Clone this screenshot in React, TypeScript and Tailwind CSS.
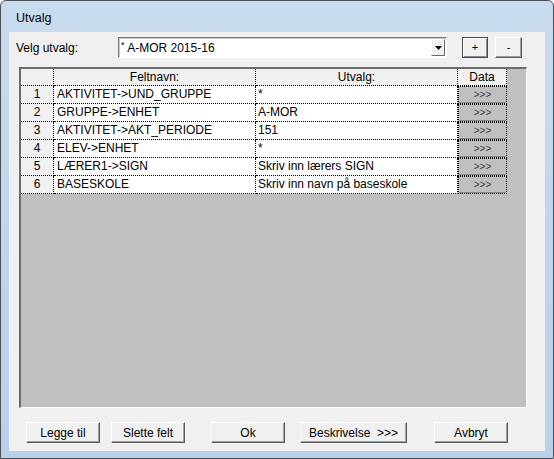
import React from 'react';

interface Row {
  id: number;
  felt: string;
  utvalg: string;
}

const rows: Row[] = [
  { id: 1, felt: 'AKTIVITET->UND_GRUPPE', utvalg: '*' },
  { id: 2, felt: 'GRUPPE->ENHET', utvalg: 'A-MOR' },
  { id: 3, felt: 'AKTIVITET->AKT_PERIODE', utvalg: '151' },
  { id: 4, felt: 'ELEV->ENHET', utvalg: '*' },
  { id: 5, felt: 'LÆRER1->SIGN', utvalg: 'Skriv inn lærers SIGN' },
  { id: 6, felt: 'BASESKOLE', utvalg: 'Skriv inn navn på baseskole' },
];

const btn =
  'h-[21px] bg-[#f0f0f0] border border-t-white border-l-white border-b-[#5a5a5a] border-r-[#5a5a5a] shadow-[inset_-1px_-1px_0_#a0a0a0] text-[12px] text-black flex items-center justify-center';

function WinButton({ label, w }: { label: string; w: string }) {
  return <div className={`${btn} ${w}`}>{label}</div>;
}

export default function App() {
  return (
    <div className="w-[554px] h-[459px] bg-white font-['Liberation_Sans',Arial,sans-serif] text-[12px] text-black">
      <div className="w-full h-full rounded-t-[6px] border border-[#4a4f57] bg-gradient-to-b from-[#c8dbef] to-[#b9d1ea] flex flex-col">
        {/* title bar */}
        <div className="h-[31px] pl-[15px] pt-[11px] text-[12.5px] text-black leading-none">Utvalg</div>

        <div className="flex-1 px-[8px] pb-[7px]">
          <div className="h-[419px] w-[536px] bg-[#f0f0f0] flex flex-col">
            {/* top row */}
            <div className="mt-[5px] h-[21px] flex items-center">
              <span className="w-[109px] pl-[7px]">Velg utvalg:</span>
              <div className="w-[329px] h-[21px] bg-white border border-t-[#7a7a7a] border-l-[#7a7a7a] border-b-white border-r-white shadow-[inset_1px_1px_0_#c8c8c8] flex items-center">
                <span className="flex-1 pl-[2px]">
                  <span className="text-[9px] align-top">*</span> A-MOR 2015-16
                </span>
                <div className="w-[14px] h-[17px] mr-[1px] bg-[#f0f0f0] border border-t-white border-l-white border-b-[#696969] border-r-[#696969] flex items-center justify-center">
                  <svg width="7" height="4" viewBox="0 0 7 4">
                    <path d="M0 0h7L3.5 4z" fill="#000" />
                  </svg>
                </div>
              </div>
              <div className="ml-[15px] w-[26px] h-[21px] bg-[#f0f0f0] border border-[#4a4a4a] shadow-[inset_1px_1px_0_#fff,inset_-1px_-1px_0_#8a8a8a] flex items-center justify-center text-[11px]">
                +
              </div>
              <div className="ml-[7px] w-[27px] h-[21px] bg-[#f0f0f0] border border-t-white border-l-white border-b-[#5a5a5a] border-r-[#5a5a5a] shadow-[inset_-1px_-1px_0_#a0a0a0] flex items-center justify-center text-[11px]">
                -
              </div>
            </div>

            {/* grid */}
            <div className="mt-[9px] ml-[10px] w-[508px] h-[341px] bg-[#c0c0c0] border-t-2 border-l-2 border-t-[#6b6b6b] border-l-[#6b6b6b] border-b border-r border-b-white border-r-white">
              <div className="flex h-[17px] bg-[#f0f0f0] w-[486px]">
                <div className="w-[33px] border-r border-b border-dotted border-black" />
                <div className="w-[202px] border-r border-b border-dotted border-black text-center leading-[16px]">Feltnavn:</div>
                <div className="w-[202px] border-r border-b border-dotted border-black text-center leading-[16px]">Utvalg:</div>
                <div className="w-[49px] border-r border-b border-dotted border-black text-center leading-[16px]">Data</div>
              </div>
              {rows.map((r) => (
                <div key={r.id} className="flex h-[18px] w-[486px]">
                  <div className="w-[33px] bg-[#f0f0f0] border-r border-b border-dotted border-black text-center leading-[17px]">{r.id}</div>
                  <div className="w-[202px] bg-white border-r border-b border-dotted border-black pl-[3px] leading-[17px] whitespace-nowrap">{r.felt}</div>
                  <div className="w-[202px] bg-white border-r border-b border-dotted border-black pl-[2px] leading-[17px] whitespace-nowrap">{r.utvalg}</div>
                  <div className="w-[49px] bg-[#c0c0c0] border border-dotted border-black shadow-[inset_0_-1px_0_#8a8a8a] text-center text-[10px] text-[#3c3c3c] leading-[15px]">
                    &gt;&gt;&gt;
                  </div>
                </div>
              ))}
            </div>

            {/* buttons */}
            <div className="mt-[14px] flex pl-[17px]">
              <WinButton label="Legge til" w="w-[74px]" />
              <div className="ml-[11px]">
                <WinButton label="Slette felt" w="w-[74px]" />
              </div>
              <div className="ml-[26px]">
                <WinButton label="Ok" w="w-[74px]" />
              </div>
              <div className="ml-[15px]">
                <WinButton label="Beskrivelse  >>>" w="w-[107px] whitespace-pre" />
              </div>
              <div className="ml-[27px]">
                <WinButton label="Avbryt" w="w-[74px]" />
              </div>
            </div>
          </div>
        </div>
      </div>
    </div>
  );
}
